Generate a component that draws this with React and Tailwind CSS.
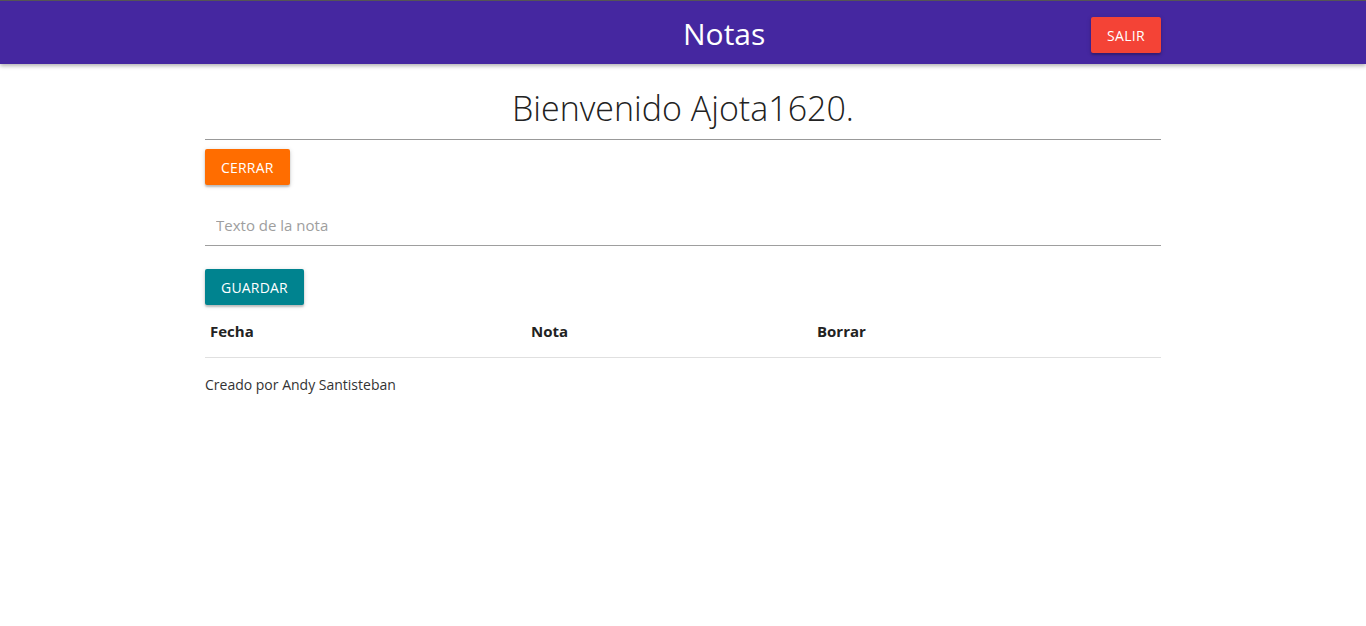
export default function App() {
  return (
    <div className="min-h-[626px] bg-white font-['Open_Sans',sans-serif] text-[#222]">
      <nav className="h-16 bg-[#4527a0] border-t border-[#555] shadow-[0_2px_4px_rgba(0,0,0,0.3)]">
        <div className="relative mx-auto w-[956px] h-full flex items-center justify-end">
          <span className="absolute left-[478px] top-[15px] text-[30px] leading-[36px] text-white">Notas</span>
          <button className="h-9 px-4 bg-[#f44336] text-white text-[14px] tracking-[0.3px] rounded-[2px] shadow-[0_2px_2px_rgba(0,0,0,0.2),0_1px_5px_rgba(0,0,0,0.15)] mt-[5px]">
            SALIR
          </button>
        </div>
      </nav>

      <main className="mx-auto w-[956px]">
        <h4 className="text-center text-[34px] font-light leading-[40px] pt-[24px] pb-[11px] text-[#222]">
          Bienvenido Ajota1620.
        </h4>
        <hr className="border-0 border-t border-[#999]" />

        <button className="mt-[9px] h-9 px-4 bg-[#ff6d00] text-white text-[14px] tracking-[0.2px] rounded-[2px] shadow-[0_2px_2px_rgba(0,0,0,0.2),0_1px_5px_rgba(0,0,0,0.15)]">
          CERRAR
        </button>

        <div className="mt-[20px]">
          <input
            type="text"
            placeholder="Texto de la nota"
            className="w-full h-[41px] px-[11px] text-[15px] border-0 border-b border-[#9e9e9e] outline-none placeholder:text-[#9e9e9e]"
          />
        </div>

        <button className="mt-[23px] h-9 px-4 bg-[#00838f] text-white text-[14px] tracking-[0.2px] rounded-[2px] shadow-[0_2px_2px_rgba(0,0,0,0.2),0_1px_5px_rgba(0,0,0,0.15)]">
          GUARDAR
        </button>

        <div className="grid grid-cols-[321px_286px_1fr] border-b border-[#e0e0e0] text-[15px] font-bold text-[#222]">
          <div className="px-[5px] py-[14px] leading-[24px]">Fecha</div>
          <div className="px-[5px] py-[14px] leading-[24px]">Nota</div>
          <div className="px-[5px] py-[14px] leading-[24px]">Borrar</div>
        </div>

        <p className="mt-[16px] text-[14px] text-[#333]">Creado por Andy Santisteban</p>
      </main>
    </div>
  );
}
